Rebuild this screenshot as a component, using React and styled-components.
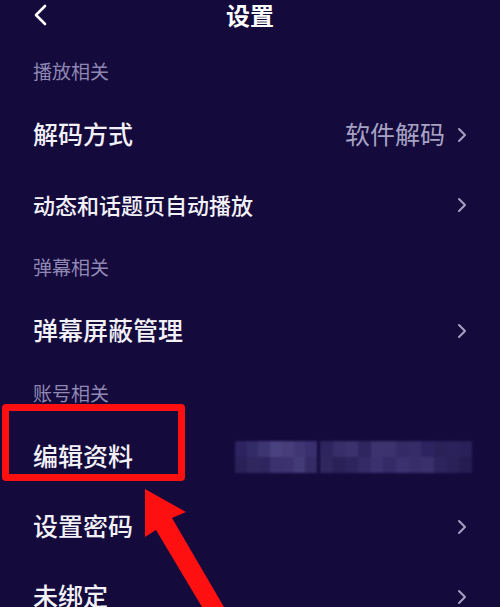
import React from "react";
import styled, { createGlobalStyle } from "styled-components";

const Global = createGlobalStyle`
  html, body { margin: 0; padding: 0; background: #140a3c; }
  body { font-family: "Noto Sans CJK SC", "Noto Sans", sans-serif; overflow: hidden; }
`;

const Page = styled.div`
  position: relative;
  width: 500px;
  height: 607px;
  overflow: hidden;
  background: #140a3c;
  color: #f3f1f8;
`;

const Header = styled.div`
  position: relative;
  height: 30px;
  display: flex;
  align-items: center;
  justify-content: center;
  margin-bottom: 14px;
`;

const Back = styled.svg`
  position: absolute;
  left: 33px;
  top: 4px;
`;

const Title = styled.div`
  font-size: 24px;
  font-weight: 700;
  line-height: 28px;
  color: #ffffff;
`;

const SectionLabel = styled.div`
  height: 56px;
  padding: 0 33px;
  display: flex;
  align-items: center;
  font-size: 19px;
  color: #8f88b3;
  margin-top: -2px;
  margin-bottom: 2px;
`;

const Row = styled.div`
  height: 70px;
  padding: 0 33px;
  display: flex;
  align-items: center;
  justify-content: space-between;
`;

const Label = styled.div`
  font-size: ${(p) => p.$size || 25}px;
  font-weight: 500;
  line-height: 1;
  margin-top: -3px;
  color: #f3f1f8;
`;

const Right = styled.div`
  display: flex;
  align-items: center;
  gap: 12px;
`;

const Value = styled.div`
  font-size: 25px;
  line-height: 1;
  margin-top: -3px;
  color: #a7a2c4;
`;

const Blur = styled.div`
  display: flex;
  gap: 3px;
  margin-right: -5px;
  filter: blur(1.2px);
`;

const BlurBlock = styled.div`
  display: grid;
  grid-template-columns: repeat(${(p) => p.$cols}, 1fr);
  grid-template-rows: 16px 16px;
  width: ${(p) => p.$w}px;
`;

const Cell = styled.div`
  background: ${(p) => p.$c};
`;

const Highlight = styled.div`
  position: absolute;
  left: 2px;
  top: 404px;
  width: 169px;
  height: 63px;
  border: 7px solid #ff1010;
  border-radius: 4px;
`;

const Arrow = styled.svg`
  position: absolute;
  left: 0;
  top: 0;
`;

const Chevron = () => (
  <svg width="10" height="16" viewBox="0 0 10 16">
    <polyline points="2,2 8,8 2,14" fill="none" stroke="#a6a1c4" strokeWidth="2" strokeLinecap="round" strokeLinejoin="round" />
  </svg>
);

const leftCells = [
  "#2c2360", "#332a68", "#3d3472", "#4a4180", "#463d7a", "#3f3673", "#3a3070",
  "#2a2158", "#30275e", "#2f265f", "#3a316e", "#3b326f", "#433a78", "#352c66",
];
const rightCells = [
  "#2e255f", "#372e6a", "#3a316d", "#2f2660", "#3c336f", "#3b326e", "#332a66", "#352c68", "#2c2360", "#2a2159", "#2b225b", "#29205a",
  "#30275f", "#2a2158", "#2d245d", "#342b66", "#3a316e", "#332a66", "#3a316e", "#362d69", "#3a316c", "#2d245d", "#2a2159", "#251c52",
];

const sections = [
  {
    label: "播放相关",
    rows: [
      { text: "解码方式", value: "软件解码" },
      { text: "动态和话题页自动播放", size: 22 },
    ],
  },
  { label: "弹幕相关", rows: [{ text: "弹幕屏蔽管理" }] },
  {
    label: "账号相关",
    rows: [
      { text: "编辑资料", blur: true },
      { text: "设置密码" },
      { text: "未绑定" },
    ],
  },
];

export default function App() {
  return (
    <Page>
      <Global />
      <Header>
        <Back width="14" height="22" viewBox="0 0 14 22">
          <polyline points="12,2 3,11 12,20" fill="none" stroke="#ffffff" strokeWidth="2.6" strokeLinecap="round" strokeLinejoin="round" />
        </Back>
        <Title>设置</Title>
      </Header>
      {sections.map((s) => (
        <React.Fragment key={s.label}>
          <SectionLabel>{s.label}</SectionLabel>
          {s.rows.map((r) => (
            <Row key={r.text}>
              <Label $size={r.size}>{r.text}</Label>
              {r.blur ? (
                <Blur>
                  <BlurBlock $cols={7} $w={82}>
                    {leftCells.map((c, i) => (
                      <Cell key={i} $c={c} />
                    ))}
                  </BlurBlock>
                  <BlurBlock $cols={12} $w={152}>
                    {rightCells.map((c, i) => (
                      <Cell key={i} $c={c} />
                    ))}
                  </BlurBlock>
                </Blur>
              ) : (
                <Right>
                  {r.value && <Value>{r.value}</Value>}
                  <Chevron />
                </Right>
              )}
            </Row>
          ))}
        </React.Fragment>
      ))}
      <Highlight />
      <Arrow width="500" height="607" viewBox="0 0 500 607">
        <polygon
          points="145,489 186,512 172,518 224,607 202,607 156,530 145,537"
          fill="#ff1010"
        />
      </Arrow>
    </Page>
  );
}
